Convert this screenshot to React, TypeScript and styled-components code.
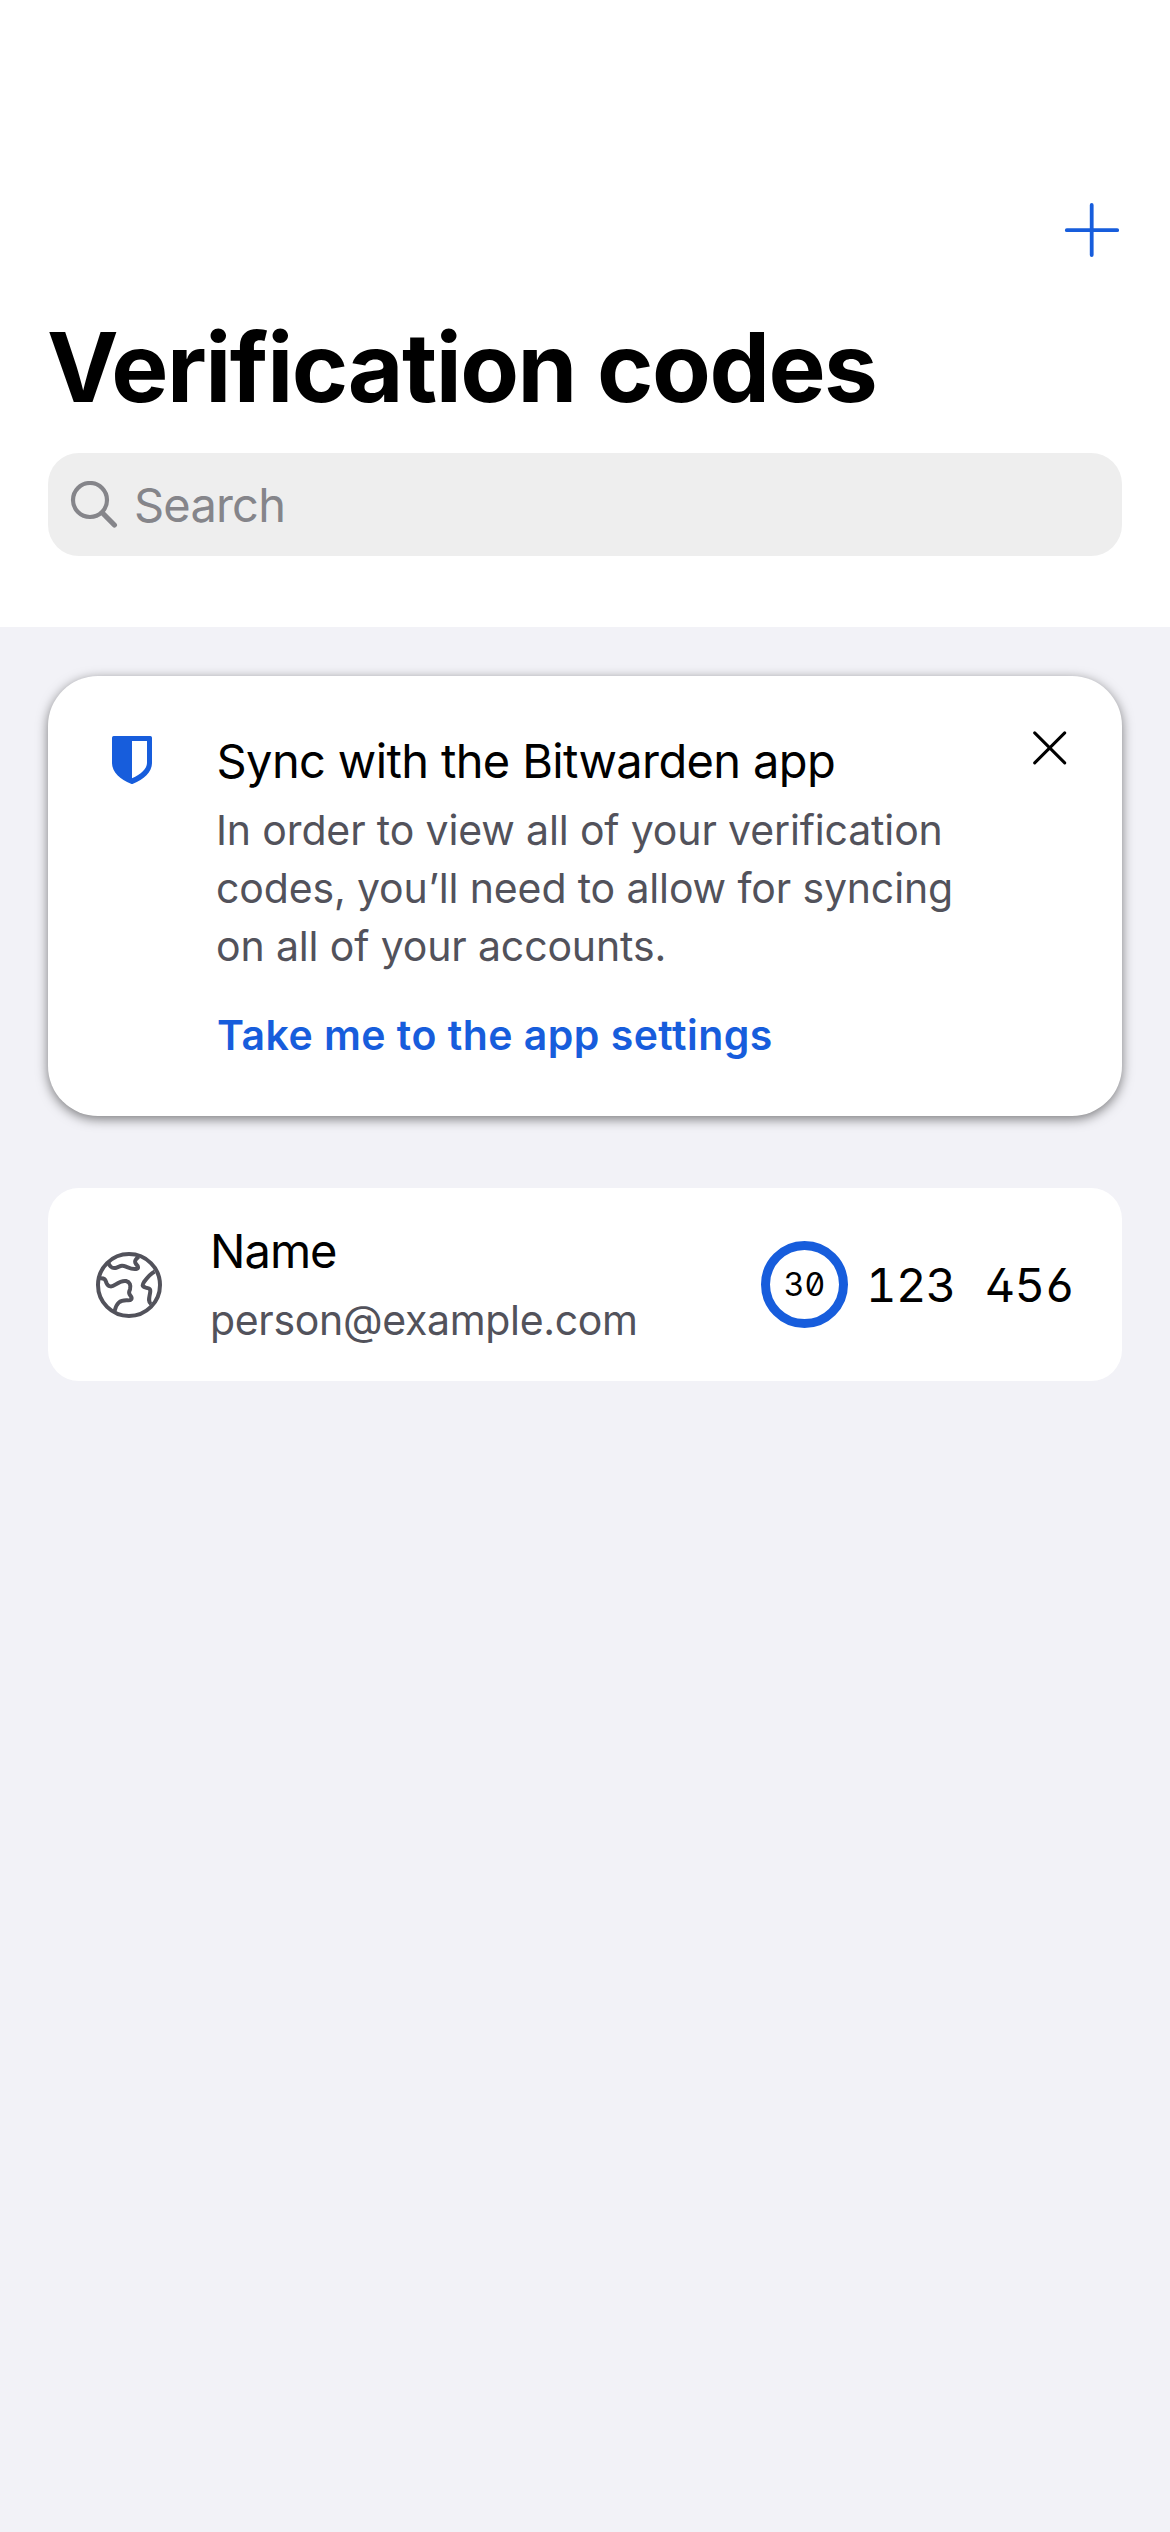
import React from 'react';
import styled, { createGlobalStyle } from 'styled-components';

const color = {
  accent: '#175ddc',
  text: '#000000',
  secondary: '#52525b',
  placeholder: '#85858a',
  field: '#eeeeee',
  canvas: '#f2f2f7',
  surface: '#ffffff',
};

const GlobalStyle = createGlobalStyle`
  *, *::before, *::after { box-sizing: border-box; }
  body {
    margin: 0;
    background: ${color.canvas};
    font-family: Inter, "Liberation Sans", sans-serif;
  }
  h1, h2, p { margin: 0; }
  button { border: 0; padding: 0; background: none; font: inherit; cursor: pointer; }
  svg { display: block; }
`;

const Screen = styled.div`
  display: flex;
  flex-direction: column;
  width: 1170px;
  min-height: 2532px;
  background: ${color.canvas};
`;

const Header = styled.header`
  display: flex;
  flex-direction: column;
  height: 627px;
  padding: 177px 48px 0;
  background: ${color.surface};
`;

const Toolbar = styled.div`
  display: flex;
  justify-content: flex-end;
  align-items: center;
  height: 106px;
`;

const AddButton = styled.button`
  width: 60px;
  height: 60px;
`;

const Title = styled.h1`
  margin: 26px 0 0 -1px;
  color: ${color.text};
  font-size: 96px;
  font-weight: 700;
  line-height: 116px;
  letter-spacing: -1.5px;
`;

const SearchField = styled.label`
  display: flex;
  align-items: center;
  gap: 16px;
  height: 103px;
  margin-top: 28px;
  padding-left: 22px;
  border-radius: 31px;
  background: ${color.field};
`;

const Placeholder = styled.span`
  color: ${color.placeholder};
  font-size: 47px;
  line-height: 57px;
  letter-spacing: -0.8px;
`;

const Content = styled.main`
  display: flex;
  flex-direction: column;
  gap: 72px;
  padding: 49px 48px;
`;

const ActionCard = styled.section`
  display: grid;
  grid-template-columns: 104px 1fr 36px;
  align-items: start;
  height: 440px;
  padding: 56px 54px 56px 64px;
  border-radius: 50px;
  background: ${color.surface};
  box-shadow: 0 3px 12px rgba(0, 0, 0, 0.5);
`;

const ShieldSlot = styled.div`
  padding-top: 4px;
`;

const CardBody = styled.div`
  display: flex;
  flex-direction: column;
  align-items: flex-start;
`;

const Heading = styled.h2`
  padding-left: 0.6px;
  color: ${color.text};
  font-size: 47px;
  font-weight: 400;
  line-height: 57px;
  letter-spacing: -0.63px;
`;

const Message = styled.p`
  max-width: 760px;
  margin-top: 12px;
  color: ${color.secondary};
  font-size: 41px;
  line-height: 58px;
  letter-spacing: -0.14px;
`;

const SettingsLink = styled.button`
  margin-top: 35px;
  padding-left: 1px;
  && { font-size: 41px; font-weight: 600; line-height: 50px; }
  color: ${color.accent};
  letter-spacing: 0.47px;
`;

const CloseButton = styled.button`
  width: 36px;
  height: 36px;
  margin-top: -2px;
`;

const ItemRow = styled.section`
  display: flex;
  align-items: center;
  height: 193px;
  padding: 0 48px;
  border-radius: 31px;
  background: ${color.surface};
`;

const ItemText = styled.div`
  display: flex;
  flex-direction: column;
  gap: 16px;
  margin: -2px auto 0 48px;
`;

const ItemName = styled.span`
  color: ${color.text};
  font-size: 47px;
  line-height: 57px;
  letter-spacing: -0.95px;
`;

const ItemAccount = styled.span`
  color: ${color.secondary};
  font-size: 41px;
  line-height: 50px;
  letter-spacing: -0.32px;
`;

const Digits = styled.span`
  color: ${color.text};
  font-variant-numeric: tabular-nums slashed-zero;
  font-feature-settings: "cv02", "cv03";
  white-space: nowrap;
`;

const Countdown = styled(Digits)`
  display: flex;
  justify-content: center;
  align-items: center;
  width: 87px;
  height: 87px;
  margin-right: 18px;
  border: 9px solid ${color.accent};
  border-radius: 50%;
  font-size: 32px;
  line-height: 38px;
`;

const Code = styled(Digits)`
  width: 208px;
  font-size: 47px;
  line-height: 57px;
  letter-spacing: -0.6px;
  word-spacing: 17px;
`;

const PlusIcon = () => (
  <svg width="60" height="60" viewBox="0 0 60 60" stroke={color.accent} strokeWidth="3.8" strokeLinecap="round">
    <path d="M4.8 30.2H55.2M29.7 4.9V55.1" />
  </svg>
);

const SearchIcon = () => (
  <svg width="48" height="48" viewBox="0 0 48 48" fill="none" stroke={color.placeholder} strokeLinecap="round">
    <circle cx="20" cy="19" r="17" strokeWidth="4.2" />
    <path d="M33 32.5L44.4 44" strokeWidth="5.2" />
  </svg>
);

const ShieldIcon = () => (
  <svg width="40" height="48" viewBox="0 0 120 144" fill={color.accent}>
    <path
      fillRule="evenodd"
      d="M5 0H115Q120 0 120 5V82C120 107 95 132 63 143.300Q60 144.500 57 143.300C25 132 0 107 0 82V5Q0 0 5 0ZM60 15V127C87 115 105 98 105 81V15Z"
    />
  </svg>
);

const CloseIcon = () => (
  <svg width="36" height="36" viewBox="0 0 36 36" stroke={color.text} strokeWidth="3" strokeLinecap="round">
    <path d="M2.700 2.900L32.700 32.900M32.700 2.900L2.700 32.900" />
  </svg>
);

const GlobeIcon = () => (
  <svg
    width="66"
    height="66"
    viewBox="48 66 198 198"
    fill="none"
    stroke={color.secondary}
    strokeWidth="12"
    strokeLinejoin="round"
  >
    <circle cx="147" cy="165" r="93" />
    <path d="M84 97C90 112 97 118 112 112C124 107 126 105 138 110C150 115 158 119 168 117C178 115 174 108 168 102C162 94 166 88 176 80" />
    <path d="M60 145C76 144 76 150 80 160C86 172 96 171 106 164C118 156 126 151 138 153C150 156 153 166 150 178C146 187 146 190 152 198C158 206 154 212 142 211C118 210 110 220 104 242" />
    <path d="M224 125C212 130 204 140 192 156C186 166 186 170 198 173C212 175 212 180 210 190C207 205 204 216 213 222" />
  </svg>
);

export default function App() {
  return (
    <Screen>
      <GlobalStyle />
      <Header>
        <Toolbar>
          <AddButton aria-label="Add">
            <PlusIcon />
          </AddButton>
        </Toolbar>
        <Title>Verification codes</Title>
        <SearchField>
          <SearchIcon />
          <Placeholder>Search</Placeholder>
        </SearchField>
      </Header>
      <Content>
        <ActionCard>
          <ShieldSlot>
            <ShieldIcon />
          </ShieldSlot>
          <CardBody>
            <Heading>Sync with the Bitwarden app</Heading>
            <Message>
              In order to view all of your verification codes, you’ll need to allow for syncing on all of your
              accounts.
            </Message>
            <SettingsLink>Take me to the app settings</SettingsLink>
          </CardBody>
          <CloseButton aria-label="Close">
            <CloseIcon />
          </CloseButton>
        </ActionCard>
        <ItemRow>
          <GlobeIcon />
          <ItemText>
            <ItemName>Name</ItemName>
            <ItemAccount>person@example.com</ItemAccount>
          </ItemText>
          <Countdown>30</Countdown>
          <Code>123 456</Code>
        </ItemRow>
      </Content>
    </Screen>
  );
}
